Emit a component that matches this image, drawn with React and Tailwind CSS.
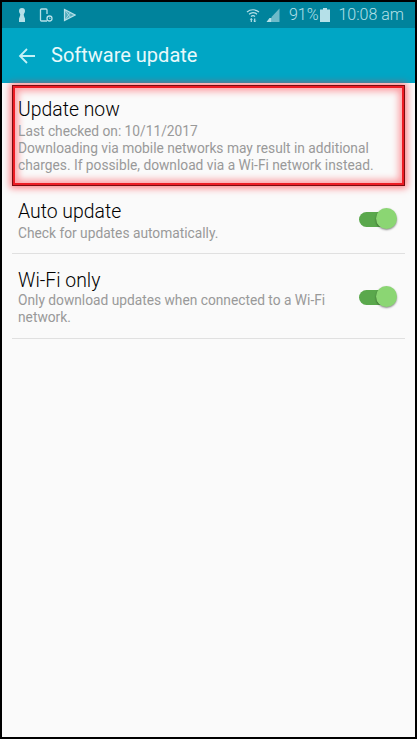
import React from "react";

const StatusBar = () => (
  <div className="h-[26px] bg-[#00839c] flex items-center pl-[14px] pr-[11px] text-[#b5e0e8]">
    <svg width="12" height="16" viewBox="0 0 12 16" className="mr-[11px]" fill="currentColor">
      <path d="M6 1a3 3 0 0 1 3 3c0 1.600-.9 2.400-1.200 3.200-.2.800.4 2.600 1.200 4.300V15H3v-3.500c.8-1.700 1.400-3.500 1.200-4.300C3.900 6.400 3 5.600 3 4a3 3 0 0 1 3-3z" />
    </svg>
    <svg width="14" height="15" viewBox="0 0 14 15" className="mr-[10px]" fill="none" stroke="currentColor" strokeWidth="1.300">
      <path d="M8 13H2.500a1 1 0 0 1-1-1V2a1 1 0 0 1 1-1h4.500a1 1 0 0 1 1 1v4" />
      <circle cx="10.500" cy="10.500" r="2.500" />
      <path d="M10.500 9.500v1h1" strokeWidth="0.800" />
    </svg>
    <svg width="13" height="14" viewBox="0 0 13 14" fill="currentColor" fillOpacity="0.45" stroke="currentColor" strokeWidth="1.200">
      <path d="M1.500 1.500v11L12 7z" />
      <path d="M1.500 1.500l6 8M1.500 12.500l6-8" strokeWidth="0.800" fill="none" />
    </svg>
    <div className="flex-1" />
    <svg width="14" height="16" viewBox="0 0 14 16" className="mr-[6px]" fill="none" stroke="currentColor" strokeWidth="1.200">
      <path d="M1 5c3.400-3 8.600-3 12 0M3 7.300c2.400-2 5.600-2 8 0M5 9.500c1.200-1 2.800-1 4 0" />
      <path d="M5.300 11.500v3.500M8.700 11.500v3.500" />
      <path d="M4.200 12.800l1.100-1.300 1.100 1.300M7.600 13.700l1.100 1.300 1.100-1.300" strokeWidth="0.800" />
    </svg>
    <svg width="15" height="14" viewBox="0 0 14 14" className="mr-[8px]">
      <path d="M0 14h5v-4H3z" fill="currentColor" />
      <path d="M5 14V9l8-8.500V14z" fill="currentColor" opacity="0.6" />
    </svg>
    <span className="text-[16px] leading-none font-light">91%</span>
    <svg width="10" height="14" viewBox="0 0 10 14" className="ml-[2px] mr-[8px]" fill="currentColor">
      <path d="M3 0h4v1.500h3V14H0V1.500h3z" />
    </svg>
    <span className="text-[16px] leading-none font-light">10:08 am</span>
  </div>
);

const Toggle = () => (
  <div className="relative w-[38px] h-[22px] shrink-0">
    <div className="absolute left-0 top-[4px] w-[30px] h-[15px] rounded-full bg-[#5aa84c]" />
    <div className="absolute right-0 top-0 w-[21px] h-[21px] rounded-full bg-[#8bd673] shadow-[0_1px_2px_rgba(0,0,0,0.45)]" />
  </div>
);

const title = "text-[19.400px] leading-[24px] text-[#000000] font-light";
const sub = "text-[13.750px] leading-[17px] text-[#999999]";

export default function App() {
  return (
    <div className="w-[418px] h-[739px] bg-white pr-px font-['Roboto',sans-serif]">
      <div className="h-full border-x-2 border-y-2 border-black bg-[#fafafa] flex flex-col overflow-hidden">
        <StatusBar />
        <div className="h-[55px] bg-[#00a6c5] flex items-center pl-[16px] text-white shrink-0">
          <svg width="18" height="18" viewBox="0 0 18 18" fill="none" stroke="#c4f1f7" strokeWidth="1.800">
            <path d="M17 9H2M9 2L2 9l7 7" />
          </svg>
          <span className="ml-[15px] text-[20px] leading-none text-[#e8f9fb] -mt-[1px]">Software update</span>
        </div>

        <div className="ml-[11px] mt-[3px] w-[391px] h-[99px] border-2 border-[#ed1c24] outline outline-1 outline-[#7a0c10] shadow-[0_0_7px_3px_rgba(255,40,50,0.6),inset_0_0_7px_3px_rgba(255,40,50,0.45)] pl-[3px] pt-[10px]">
          <div className={title}>Update now</div>
          <div className={`${sub} mt-[1px] whitespace-nowrap`}>
            <div>Last checked on: 10/11/2017</div>
            <div>Downloading via mobile networks may result in additional</div>
            <div>charges. If possible, download via a Wi-Fi network instead.</div>
          </div>
        </div>

        <div className="mx-[10px] mt-[15px] h-[54px] border-b border-[#e0e0e0] flex items-start pl-[6px] pr-[8px]">
          <div className="flex-1">
            <div className={title}>Auto update</div>
            <div className={`${sub} mt-[1px]`}>Check for updates automatically.</div>
          </div>
          <div className="mt-[8px]"><Toggle /></div>
        </div>

        <div className="mx-[10px] h-[85px] border-b border-[#e0e0e0] flex items-start pl-[6px] pr-[8px] pt-[15px]">
          <div className="flex-1">
            <div className={title}>Wi-Fi only</div>
            <div className={`${sub} -mt-[1px] w-[345px]`}>Only download updates when connected to a Wi-Fi network.</div>
          </div>
          <div className="mt-[17px] -ml-[8px]"><Toggle /></div>
        </div>
      </div>
    </div>
  );
}
